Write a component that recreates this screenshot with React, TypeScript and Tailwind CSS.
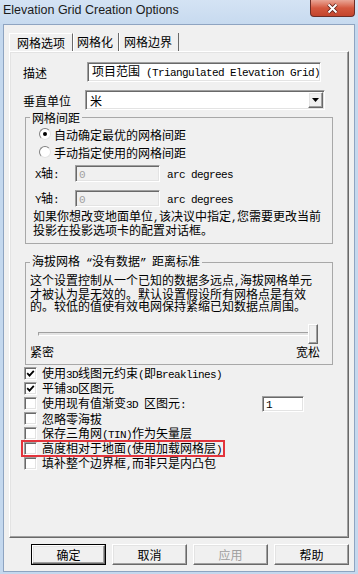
import React from 'react';

const latin = "font-['Liberation_Mono',monospace] text-[11px] tracking-[-0.6px]";
const sunken =
  'border border-t-[#a0a0a0] border-l-[#a0a0a0] border-r-white border-b-white shadow-[inset_1px_1px_0_#696969,inset_-1px_-1px_0_#e3e3e3]';
const raised =
  'border border-t-white border-l-white border-r-[#696969] border-b-[#696969] shadow-[inset_-1px_-1px_0_#a0a0a0,inset_1px_1px_0_#e3e3e3]';

// SimSun draws latin glyphs half-width; render those runs in a mono face
const Txt = ({ s }: { s: string }) => (
  <>
    {s.split(/([\x20-\x7e\u201c\u201d]+)/).map((part, i) =>
      i % 2 ? (
        <span key={i} className={latin}>
          {part}
        </span>
      ) : (
        <React.Fragment key={i}>{part}</React.Fragment>
      )
    )}
  </>
);

const Check = ({ checked }: { checked?: boolean }) => (
  <span className={`w-[13px] h-[13px] bg-white flex items-center justify-center shrink-0 ${sunken}`}>
    {checked && (
      <svg width="9" height="9" viewBox="0 0 9 9">
        <path d="M1.2 4.2 L3.5 6.6 L7.8 1.8" stroke="#000" strokeWidth="1.8" fill="none" />
      </svg>
    )}
  </span>
);

const Radio = ({ on }: { on?: boolean }) => (
  <span className="w-[12px] h-[12px] rounded-full bg-white border border-t-[#808080] border-l-[#808080] border-r-[#e3e3e3] border-b-[#e3e3e3] flex items-center justify-center shrink-0">
    {on && <span className="w-[4px] h-[4px] rounded-full bg-black" />}
  </span>
);

const options: { label: string; checked?: boolean; field?: string; marked?: boolean }[] = [
  { label: '使用3D线图元约束(即Breaklines)', checked: true },
  { label: '平铺3D区图元', checked: true },
  { label: '使用现有值渐变3D 区图元:', field: '1' },
  { label: '忽略零海拔' },
  { label: '保存三角网(TIN)作为矢量层' },
  { label: '高度相对于地面(使用加载网格层)', marked: true },
  { label: '填补整个边界框,而非只是内凸包' },
];

const Button = ({ label, isDefault, disabled }: { label: string; isDefault?: boolean; disabled?: boolean }) => (
  <div className={`w-[75px] h-[21px] ${isDefault ? 'border border-black' : ''}`}>
    <div
      className={`w-full h-full flex items-center justify-center bg-[#f0f0f0] ${raised} ${
        disabled ? 'text-[#a0a0a0]' : ''
      }`}
    >
      {label}
    </div>
  </div>
);

export default function App() {
  return (
    <div className="w-[358px] h-[574px] flex flex-col bg-[#c4d8ee] font-['Noto_Sans_CJK_SC',sans-serif] text-[12px] leading-[13px] text-black overflow-hidden">
      <div className="h-[24px] shrink-0 flex justify-between bg-gradient-to-b from-[#d4e3f4] to-[#c7daef]">
        <span className="pl-[3px] leading-[20px] text-[12.5px] font-['Liberation_Sans',sans-serif] text-[#1b1b1b]">
          Elevation Grid Creation Options
        </span>
        <div className="mr-[3px] w-[45px] h-[17px] rounded-b-[4px] border border-t-0 border-[#6d2d26] bg-gradient-to-b from-[#e9a596] via-[#d4583f] to-[#c3452d] flex items-center justify-center">
          <svg width="13" height="11" viewBox="0 0 13 11">
            <path d="M2.5 1.5 L10.5 9.5 M10.5 1.5 L2.5 9.5" stroke="#5a1d16" strokeWidth="3.6" />
            <path d="M2.5 1.5 L10.5 9.5 M10.5 1.5 L2.5 9.5" stroke="#fff" strokeWidth="2" />
          </svg>
        </div>
      </div>

      <div className="mx-[3px] mb-[2px] flex-1 border border-[#8ea4c1] bg-[#f0f0f0] flex flex-col px-[5px] pt-[8px]">
        <div className="flex h-[18px] leading-[18px]">
          <div className="w-[64px] pl-[7px] border-t border-l border-white border-r border-r-[#696969]">网格选项</div>
          <div className="w-[46px] pl-[3px] border-l border-white border-r border-r-[#696969]">网格化</div>
          <div className="w-[60px] pl-[4px] border-l border-white border-r border-r-[#696969]">网格边界</div>
        </div>

        <div className={`h-[487px] shrink-0 flex flex-col bg-[#f0f0f0] ${raised}`}>
          <div className="mt-[10px] h-[20px] flex items-center pl-[13px]">
            <span className="w-[64px]">描述</span>
            <div className={`w-[234px] h-[20px] bg-white flex items-center pl-[4px] overflow-hidden ${sunken}`}>
              <span className="whitespace-nowrap">
                <Txt s="项目范围 (Triangulated Elevation Grid)" />
              </span>
            </div>
          </div>
          <div className="mt-[8px] h-[20px] flex items-center pl-[13px]">
            <span className="w-[62px]">垂直单位</span>
            <div className={`w-[240px] h-[20px] bg-white flex items-center justify-between pl-[4px] pr-[1px] ${sunken}`}>
              <span>米</span>
              <div className={`w-[15px] h-[16px] bg-[#f0f0f0] flex items-center justify-center ${raised}`}>
                <svg width="7" height="4" viewBox="0 0 7 4">
                  <path d="M0 0 H7 L3.5 4 Z" fill="#000" />
                </svg>
              </div>
            </div>
          </div>

          <fieldset className="mt-[1px] ml-[15px] w-[308px] border border-[#a8a8a8] pb-[7px]">
            <legend className="ml-[4px] px-[2px] leading-[13px]">网格间距</legend>
            <div className="mt-[3px] h-[14px] flex items-center gap-[3px] pl-[13px]">
              <Radio on />
              <span>自动确定最优的网格间距</span>
            </div>
            <div className="mt-[4px] h-[14px] flex items-center gap-[3px] pl-[13px]">
              <Radio />
              <span>手动指定使用的网格间距</span>
            </div>
            <div className="mt-[6px] h-[17px] flex items-center pl-[9px]">
              <span className="w-[40px]">
                <Txt s="X轴:" />
              </span>
              <div className={`w-[85px] h-[17px] bg-[#f0f0f0] flex items-center pl-[3px] text-[#a0a0a0] ${sunken}`}>
                <span>
                  <Txt s="0" />
                </span>
              </div>
              <span className="ml-[7px]">
                <Txt s="arc degrees" />
              </span>
            </div>
            <div className="mt-[8px] h-[17px] flex items-center pl-[9px]">
              <span className="w-[40px]">
                <Txt s="Y轴:" />
              </span>
              <div className={`w-[85px] h-[17px] bg-[#f0f0f0] flex items-center pl-[3px] text-[#a0a0a0] ${sunken}`}>
                <span>
                  <Txt s="0" />
                </span>
              </div>
              <span className="ml-[7px]">
                <Txt s="arc degrees" />
              </span>
            </div>
            <p className="mt-[3px] pl-[7px] leading-[12px]">
              <Txt s="如果你想改变地面单位,该决议中指定,您需要更改当前" />
              <br />
              投影在投影选项卡的配置对话框。
            </p>
          </fieldset>

          <fieldset className="mt-[10px] ml-[15px] w-[308px] border border-[#a8a8a8] pb-[6px]">
            <legend className="ml-[4px] px-[2px] leading-[13px]">
              <Txt s="海拔网格 “没有数据” 距离标准" />
            </legend>
            <p className="mt-[4px] pl-[4px] leading-[12px]">
              <Txt s="这个设置控制从一个已知的数据多远点,海拔网格单元" />
              <br />
              才被认为是无效的。默认设置假设所有网格点是有效
              <br />
              的。较低的值使有效电网保持紧缩已知数据点周围。
            </p>
            <div className="mt-[12px] h-[20px] flex items-center pl-[12px]">
              <div className="w-[272px] h-[4px] border border-t-[#a0a0a0] border-l-[#a0a0a0] border-r-white border-b-white bg-[#e3e3e3]" />
              <div className={`-ml-[2px] w-[10px] h-[20px] bg-[#f0f0f0] ${raised}`} />
            </div>
            <div className="mt-[1px] h-[13px] flex justify-between pl-[4px] pr-[12px]">
              <span>紧密</span>
              <span>宽松</span>
            </div>
          </fieldset>

          <div className="mt-[1px] pl-[14px] flex flex-col">
            {options.map((o) =>
              o.marked ? (
                <div
                  key={o.label}
                  className="-ml-[3px] -my-[1px] w-[204px] h-[17px] border-2 border-[#e3343c] pl-[1px] flex items-center gap-[5px]"
                >
                  <Check checked={o.checked} />
                  <span>
                    <Txt s={o.label} />
                  </span>
                </div>
              ) : (
                <div key={o.label} className="h-[15px] flex items-center gap-[5px]">
                  <Check checked={o.checked} />
                  <span>
                    <Txt s={o.label} />
                  </span>
                  {o.field && (
                    <div className={`ml-auto mr-[44px] w-[42px] h-[16px] bg-white flex items-center pl-[3px] ${sunken}`}>
                      <span>
                        <Txt s={o.field} />
                      </span>
                    </div>
                  )}
                </div>
              )
            )}
          </div>
        </div>

        <div className="mt-[6px] h-[21px] flex justify-end gap-[6px]">
          <Button label="确定" isDefault />
          <Button label="取消" />
          <Button label="应用" disabled />
          <Button label="帮助" />
        </div>
      </div>
    </div>
  );
}
